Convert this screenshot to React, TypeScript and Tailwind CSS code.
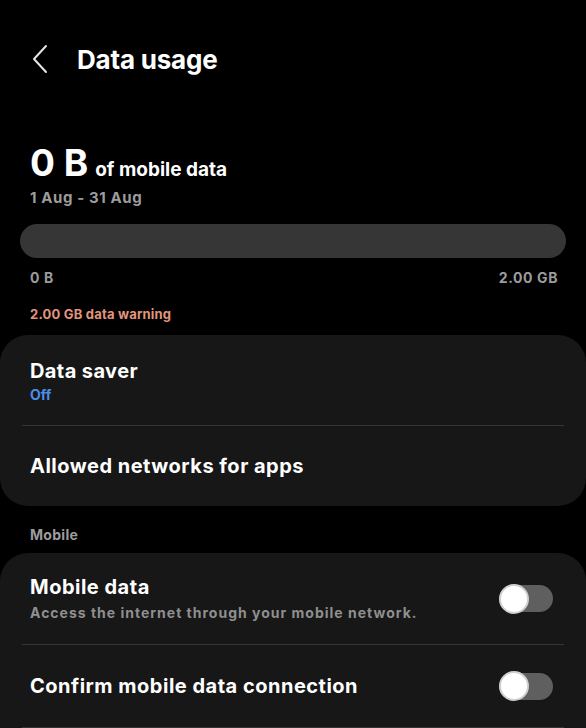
import React from 'react';

const font = { fontFamily: 'Inter, "Noto Sans", Roboto, sans-serif' };

function Toggle() {
  return (
    <div className="relative w-[54px] h-[30px] flex items-center flex-shrink-0">
      <div className="absolute left-0 right-0 h-[27px] rounded-full bg-[#5f5f5f]" />
      <div className="absolute left-0 w-[30px] h-[30px] rounded-full bg-white border-2 border-[#d0d0d0]" />
    </div>
  );
}

export default function App() {
  return (
    <div className="w-[586px] h-[728px] overflow-hidden bg-black text-white" style={font}>
      {/* Header */}
      <div className="flex items-center h-[40px] mt-[39px] pl-[31px]">
        <svg width="18" height="30" viewBox="0 0 18 30" fill="none">
          <path d="M15 2 L3 15 L15 28" stroke="#e5e5e5" strokeWidth="2" strokeLinecap="round" strokeLinejoin="round" />
        </svg>
        <h1 className="ml-[28px] text-[26px] font-bold tracking-[-0.2px]">Data usage</h1>
      </div>

      {/* Usage summary */}
      <div className="px-[30px] mt-[65px]">
        <div className="flex items-baseline">
          <span className="text-[37px] font-bold leading-none">0 B</span>
          <span className="ml-[7px] text-[19px] font-bold leading-none">of mobile data</span>
        </div>
        <p className="mt-[9px] text-[15px] font-bold tracking-[0.6px] text-[#9c9c9c] leading-none">1 Aug - 31 Aug</p>
      </div>

      <div className="mx-[20px] mt-[19px] h-[34px] rounded-full bg-[#363636]" />

      <div className="px-[30px] mt-[13px] flex justify-between text-[14px] font-bold tracking-[0.6px] text-[#9c9c9c] leading-none">
        <span>0 B</span>
        <span className="-mr-[2px]">2.00 GB</span>
      </div>

      <p className="px-[30px] mt-[23px] text-[13px] font-bold tracking-[0.2px] text-[#e2957c] leading-none">2.00 GB data warning</p>

      {/* Card 1 */}
      <div className="mt-[14px] rounded-[28px] bg-[#171717]">
        <div className="h-[90px] px-[30px] flex flex-col justify-center">
          <p className="text-[20px] font-bold tracking-[0.4px] leading-tight">Data saver</p>
          <p className="mt-[4px] text-[14px] font-bold text-[#4b8ee8] leading-none">Off</p>
        </div>
        <div className="mx-[22px] h-px bg-[#353535]" />
        <div className="h-[80px] px-[30px] flex items-center">
          <p className="text-[20px] font-bold tracking-[0.5px]">Allowed networks for apps</p>
        </div>
      </div>

      <p className="px-[30px] mt-[22px] text-[14px] font-bold tracking-[0.3px] text-[#9c9c9c] leading-none">Mobile</p>

      {/* Card 2 */}
      <div className="mt-[11px] rounded-t-[28px] bg-[#171717]">
        <div className="h-[91px] pl-[30px] pr-[33px] flex items-center justify-between">
          <div>
            <p className="text-[20px] font-bold tracking-[0.5px] leading-tight">Mobile data</p>
            <p className="mt-[4px] text-[14px] font-bold tracking-[1px] text-[#8f8f8f] leading-tight">Access the internet through your mobile network.</p>
          </div>
          <Toggle />
        </div>
        <div className="mx-[22px] h-px bg-[#353535]" />
        <div className="h-[82px] pl-[30px] pr-[33px] flex items-center justify-between">
          <p className="text-[20px] font-bold tracking-[0.5px]">Confirm mobile data connection</p>
          <Toggle />
        </div>
        <div className="mx-[22px] h-px bg-[#353535]" />
      </div>
    </div>
  );
}
